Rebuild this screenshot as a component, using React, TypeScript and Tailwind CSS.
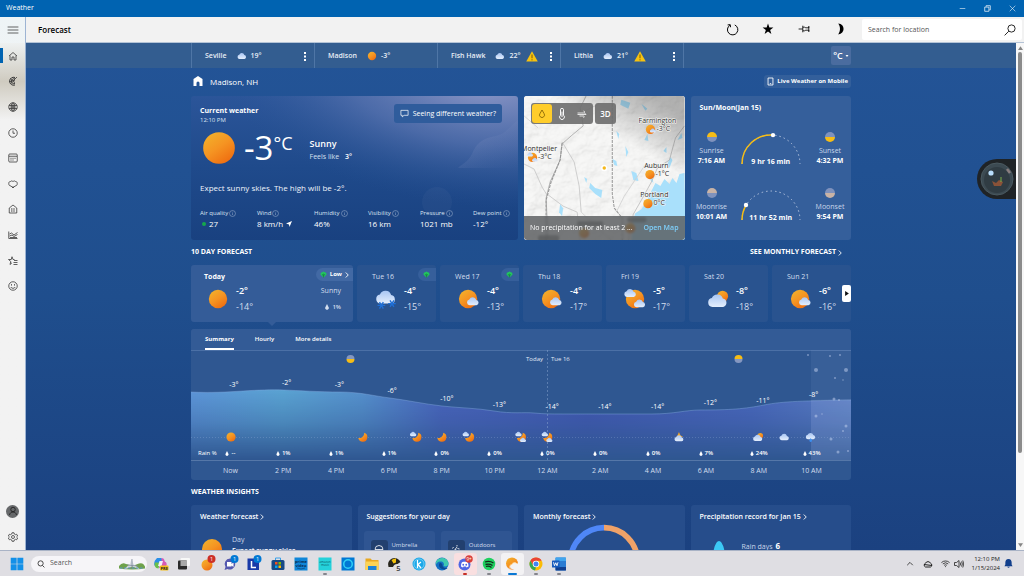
import type { ReactNode } from "react";

type Kind =
  | "sun" | "partly" | "partlyTwo" | "mostly" | "snow" | "cloud"
  | "moon" | "moonCloud" | "moonTwo" | "starCloud" | "drizzle";

const CLOUD = "M6 15a5 5 0 0 1-.6-9.9A6.5 6.5 0 0 1 17.6 5.6 4.8 4.8 0 0 1 18 15z";
const MOON = "M14 1.500A10 10 0 1 1 1.200 13C8 14.500 14.500 9 14 1.500z";

function Defs() {
  return (
    <svg width="0" height="0" className="absolute" aria-hidden="true">
      <defs>
        <linearGradient id="sunFill" x1="0.1" y1="0" x2="0.8" y2="1">
          <stop offset="0" stopColor="#f2b32c" />
          <stop offset="0.5" stopColor="#f59422" />
          <stop offset="1" stopColor="#ee6a0f" />
        </linearGradient>
        <linearGradient id="cloudFill" x1="0" y1="0" x2="0" y2="1">
          <stop offset="0" stopColor="#a9c6f3" />
          <stop offset="1" stopColor="#e4eefc" />
        </linearGradient>
      </defs>
    </svg>
  );
}

function Flake({ x, y }: { x: number; y: number }) {
  return (
    <g transform={`translate(${x} ${y})`} stroke="#1f6fd6" strokeWidth="1.5">
      <path d="M-4.200 0h8.400M-2.100-3.600l4.200 7.200M2.100-3.600l-4.200 7.200" />
    </g>
  );
}

function Glyph({ kind }: { kind: Kind }) {
  const cloud = (t: string) => <path d={CLOUD} transform={t} fill="url(#cloudFill)" />;
  switch (kind) {
    case "sun":
      return <circle cx="12" cy="12" r="10" fill="url(#sunFill)" />;
    case "partly":
      return <><circle cx="11" cy="12" r="10" fill="url(#sunFill)" />{cloud("translate(9 9.5) scale(.62)")}</>;
    case "partlyTwo":
      return <><circle cx="12" cy="12" r="10" fill="url(#sunFill)" />{cloud("translate(-.5 .5) scale(.62)")}{cloud("translate(10 12) scale(.6)")}</>;
    case "mostly":
      return <><circle cx="17" cy="9" r="6" fill="url(#sunFill)" />{cloud("translate(0 6) scale(.98)")}</>;
    case "snow":
      return <>{cloud("translate(0 2)")}<Flake x={7} y={19} /><Flake x={18.5} y={17} /></>;
    case "cloud":
      return cloud("translate(0 4)");
    case "moon":
      return <path d={MOON} transform="translate(1 1)" fill="url(#sunFill)" />;
    case "moonCloud":
      return <><path d={MOON} transform="translate(4 1)" fill="url(#sunFill)" />{cloud("translate(-1 0) scale(.68)")}</>;
    case "moonTwo":
      return <><path d={MOON} transform="translate(2 1)" fill="url(#sunFill)" />{cloud("translate(-1 0) scale(.68)")}{cloud("translate(9 13) scale(.66)")}</>;
    case "starCloud":
      return <><path d="M12 1l3 7 6 4H6l3-4z" fill="#f5a623" />{cloud("translate(1 7) scale(.95)")}</>;
    case "drizzle":
      return <>{cloud("translate(0 2)")}<path d="M12 14l2.6 4.5a2.9 2.9 0 1 1-5.2 0z" fill="#3c8ff0" /></>;
  }
}

function WeatherIcon({ kind, className }: { kind: Kind; className: string }) {
  return (
    <svg viewBox="0 0 24 24" className={className} aria-hidden="true">
      <Glyph kind={kind} />
    </svg>
  );
}

function Line({ children, className = "size-[10px]", width = 1.6 }: { children: ReactNode; className?: string; width?: number }) {
  return (
    <svg viewBox="0 0 20 20" className={className} fill="none" stroke="currentColor" strokeWidth={width} aria-hidden="true">
      {children}
    </svg>
  );
}

function Drop({ className = "h-[6px] w-[4px]" }: { className?: string }) {
  return (
    <svg viewBox="0 0 8 12" className={className} aria-hidden="true">
      <path d="M4 0l3 6a3.6 3.6 0 1 1-6 0z" fill="currentColor" />
    </svg>
  );
}

function Chevron() {
  return (
    <svg viewBox="0 0 8 12" className="h-[6px] w-[4px]" fill="none" stroke="currentColor" strokeWidth="1.8" aria-hidden="true">
      <path d="M1.5 1l5 5-5 5" />
    </svg>
  );
}

function Info() {
  return (
    <Line className="size-[7px] opacity-70" width={1.5}>
      <circle cx="10" cy="10" r="8.5" />
      <path d="M10 9v5.5M10 5.2v2" />
    </Line>
  );
}

/* ---------- window chrome ---------- */

function TitleBar() {
  return (
    <div className="flex h-[17px] shrink-0 items-center bg-[#0063b1] pl-[6px] text-[7px] text-white">
      <span>Weather</span>
      <div className="ml-auto flex">
        <button aria-label="Minimize" className="flex w-[25px] justify-center"><Line className="size-[7px]"><path d="M2 10h16" /></Line></button>
        <button aria-label="Restore" className="flex w-[25px] justify-center"><Line className="size-[7px]" width={2}><path d="M2 6h12v12H2zM6 5V2h12v12h-3" /></Line></button>
        <button aria-label="Close" className="flex w-[24px] justify-center"><Line className="size-[7px]"><path d="M2 2l16 16M18 2L2 18" /></Line></button>
      </div>
    </div>
  );
}

const NAV: { label: string; icon: ReactNode }[] = [
  { label: "Home", icon: <path d="M2 10l8-7 8 7M4 9v9h4v-6h4v6h4V9" /> },
  { label: "Maps", icon: <><path d="M14 3A8 8 0 1 0 14 18M14 6a5 5 0 1 0 0 9M14 9a2 2 0 1 0 0 3" strokeWidth="2" /><path d="M9 11l9-9" /><path d="M4 5l6 5M2 11h6M5 16l4-4" /></> },
  { label: "Hourly Maps", icon: <><circle cx="10" cy="10" r="8.5" /><ellipse cx="10" cy="10" rx="4" ry="8.5" /><path d="M2 7h16M2 13h16M10 2v16" /><path d="M6 10h8" strokeWidth="2" /></> },
  { label: "Hourly", icon: <><circle cx="10" cy="10" r="8.5" /><path d="M10 5v5.5h4" /></> },
  { label: "Monthly", icon: <><rect x="1.5" y="2" width="17" height="16" rx="2" /><path d="M2 6.500h16" /><path d="M5 10.500h10M5 14h7" strokeDasharray="2 2" strokeWidth="2" /></> },
  { label: "Pollen", icon: <path d="M10 18v-4M6 14c-3 0-4.500-2-4.500-5S3 5 5 5c1-2 3-1 5 0 2-1 4-2 5 0 2 0 3.500 1 3.500 4s-1.500 5-4.500 5l-4 4z" /> },
  { label: "Life", icon: <><path d="M2.500 18V8L10 2l7.500 6v10z" /><path d="M6 10h8M6 14h8" strokeDasharray="3 1.500" strokeWidth="2" /></> },
  { label: "Trends", icon: <path d="M1.500 3v14H19M3 8l4-2 5 4 7-5M3 12l5-2 4 3 7-4M4 15h14" /> },
  { label: "Favorites", icon: <path d="M13 7h-3L8 1.500 6.500 7H1l4.500 4L4 17l4-3.500M12 9h7M11 13h8M11 17h8" /> },
  { label: "Feedback", icon: <><circle cx="10" cy="10" r="8.500" /><path d="M5.500 12c1.500 3.500 7.500 3.500 9 0" /><path d="M7 6.500v2.500M13 6.500v2.500" strokeWidth="2" /></> },
];

function Sidebar() {
  return (
    <nav aria-label="Sections" className="flex w-[26px] shrink-0 flex-col border-r border-[#9db4d3] bg-linear-to-b from-[#eef4f6] via-[#f2f2f2] via-30% to-[#f2f2f2] text-[#3a3a3a]">
      <button aria-label="Menu" className="flex h-[26px] items-center justify-center"><Line className="size-[12px]" width={1.3}><path d="M1 5h18M1 10h18M1 15h18" /></Line></button>
      <div className="grid h-64 grid-rows-10 bg-linear-to-b from-[#eef1f1] via-[#cfcbc0] via-15% to-[#f2f2f2] to-30%">
        {NAV.map((n, i) => (
          <button key={n.label} aria-label={n.label} className="flex items-center">
            <span className={i === 0 ? "h-[15px] w-[3px] bg-[#0063b1]" : "h-[15px] w-[3px]"} />
            <span className="flex flex-1 justify-center pr-[2px]"><Line>{n.icon}</Line></span>
          </button>
        ))}
      </div>
      <button aria-label="Account" className="mt-auto flex h-[26px] items-center justify-center">
        <span className="flex size-[13px] items-center justify-center rounded-full bg-[#66686a] text-[#1c1c1c]">
          <Line><circle cx="10" cy="7" r="4.500" /><path d="M3 18c1-8 13-8 14 0" /></Line>
        </span>
      </button>
      <button aria-label="Settings" className="flex h-[26px] items-center justify-center">
        <Line>
          <path d="M8 1.500h4l.6 2.600 2.200 1.200 2.500-.8 2 3.500-2 1.900v.2l2 1.900-2 3.500-2.500-.8-2.200 1.200-.6 2.600H8l-.6-2.600-2.200-1.200-2.500.8-2-3.500 2-1.900v-.2l-2-1.900 2-3.500 2.500.8 2.200-1.200z" />
          <circle cx="10" cy="10" r="3" />
        </Line>
      </button>
    </nav>
  );
}

function Header() {
  return (
    <header className="flex h-[26px] shrink-0 items-center border-b border-[#b4c3d6] bg-[#f2f2f2] pr-[2px] pl-[12px] text-black">
      <h1 className="text-[8px] leading-[12px] font-semibold">Forecast</h1>
      <div className="mr-[4px] ml-auto flex">
        <button aria-label="Refresh" className="flex w-9 justify-center"><Line className="size-[13px]" width={1.5}><path d="M6 3.500A8 8 0 1 0 13.500 3M2.500 3l4-.5.500 4" /></Line></button>
        <button aria-label="Favorite" className="flex w-9 justify-center">
          <svg viewBox="0 0 20 20" className="size-[12px]"><path d="M10 1l2.300 6.500H19l-5.400 4.100 2 6.900L10 14.300l-5.600 4.200 2-6.900L1 7.500h6.700z" /></svg>
        </button>
        <button aria-label="Pin" className="flex w-9 justify-center"><Line className="size-[12px]" width={1.4}><path d="M1 10h7M8 4.500v11M8 7h3l2 1h5V5.500v9V12h-5l-2 1H8" /></Line></button>
        <button aria-label="Dark mode" className="flex w-9 justify-center">
          <svg viewBox="0 0 20 20" className="size-[12px]"><path d="M7 1c12 1 12 17 0 18 4-5 4-13 0-18z" /></svg>
        </button>
      </div>
      <label className="flex h-[21px] w-[160px] items-center rounded-[2px] bg-white px-[6px]">
        <input aria-label="Search for location" placeholder="Search for location" className="min-w-0 flex-1 bg-transparent pt-[2px] text-[7px] outline-none placeholder:text-[#555]" />
        <Line className="size-[12px]" width={1.4}><circle cx="12.500" cy="7.500" r="6" /><path d="M8 12l-7 7" /></Line>
      </label>
    </header>
  );
}

/* ---------- locations ---------- */

const PLACES: { name: string; kind: Kind; temp: string; alert?: boolean; menu?: boolean }[] = [
  { name: "Seville", kind: "cloud", temp: "19°", menu: true },
  { name: "Madison", kind: "sun", temp: "-3°" },
  { name: "Fish Hawk", kind: "cloud", temp: "22°", alert: true, menu: true },
  { name: "Lithia", kind: "cloud", temp: "21°", alert: true, menu: true },
];

function LocationBar() {
  return (
    <div className="h-[25px] bg-[#335d90]">
      <div className="mx-auto flex h-full w-full max-w-[660px] items-center">
        <div className="flex h-full border-r border-[#4f76a6]">
          {PLACES.map((p) => (
            <div key={p.name} className="flex w-[123px] items-center border-l border-[#4f76a6] pt-px pr-[8px] pl-[13px] text-[7px] leading-[12px] font-semibold text-[#e8eef6]">
              <a href="#place">{p.name}</a>
              <WeatherIcon kind={p.kind} className="mr-[4px] ml-[10px] size-[10px]" />
              <span>{p.temp}</span>
              {p.alert && (
                <svg viewBox="0 0 24 22" className="ml-[6px] h-[11px] w-[12px]" role="img" aria-label="Alert">
                  <path d="M12 0.500l11.500 20.500H.5z" fill="#f5c211" />
                  <path d="M12 7v7.500M12 16.500v2.200" stroke="#7a5b06" strokeWidth="2" />
                </svg>
              )}
              {p.menu && (
                <button aria-label={`${p.name} options`} className="ml-auto">
                  <svg viewBox="0 0 4 18" className="h-[9px] w-[2px]" fill="#fff"><path d="M0 0h4v4H0zM0 7h4v4H0zM0 14h4v4H0z" /></svg>
                </button>
              )}
            </div>
          ))}
        </div>
        <button className="ml-auto flex h-[19px] w-[20px] items-center justify-center gap-[2px] rounded-[2px] bg-[#4a6c9f] text-[9px] font-semibold text-white">
          °C
          <svg viewBox="0 0 6 4" className="h-[2px] w-[4px]"><path d="M0 0h6L3 4z" fill="currentColor" /></svg>
        </button>
      </div>
    </div>
  );
}

/* ---------- current weather ---------- */

const METRICS: { label: string; value: string; mark?: "dot" | "arrow" }[] = [
  { label: "Air quality", value: "27", mark: "dot" },
  { label: "Wind", value: "8 km/h", mark: "arrow" },
  { label: "Humidity", value: "46%" },
  { label: "Visibility", value: "16 km" },
  { label: "Pressure", value: "1021 mb" },
  { label: "Dew point", value: "-12°" },
];

function CurrentCard() {
  return (
    <section className="relative col-span-2 h-[144px] overflow-hidden rounded-[3px] bg-linear-to-b from-[#2b5599] via-[#1f4a8b] to-[#194180] text-white">
      <svg viewBox="0 0 327 144" preserveAspectRatio="none" className="absolute inset-0 size-full" aria-hidden="true">
        <defs>
          <radialGradient id="haze" gradientUnits="userSpaceOnUse" cx="0" cy="0" r="1" gradientTransform="translate(290 -14) rotate(6) scale(270 125)">
            <stop offset="0" stopColor="#929bc9" stopOpacity="1" />
            <stop offset="0.5" stopColor="#5f78b3" stopOpacity="0.65" />
            <stop offset="1" stopColor="#2a5496" stopOpacity="0" />
          </radialGradient>
          <linearGradient id="puff" x1="0" y1="0" x2="1" y2="1">
            <stop offset="0" stopColor="#a3a9cf" stopOpacity="0.35" />
            <stop offset="1" stopColor="#4a6aaa" stopOpacity="0" />
          </linearGradient>
        </defs>
        <rect width="327" height="144" fill="url(#haze)" />
        <path d="M327 24c-8 6-12 14-22 16-14 2-20 8-24 18-4 8-10 10-14 14h60z" fill="url(#puff)" />
        <circle cx="246" cy="106" r="15" fill="#ffffff" opacity="0.03" />
      </svg>
      <div className="relative flex h-full flex-col pl-[9px]">
        <div className="flex justify-between pt-[8px] pr-[16px]">
          <div className="pt-[2px]">
            <h2 className="text-[7px] leading-[10px] font-bold">Current weather</h2>
            <p className="text-[6px] leading-[9px] text-[#dbe4f2]">12:10 PM</p>
          </div>
          <button className="flex h-[19px] items-center gap-[4px] rounded-[3px] bg-[#2f5c9c] px-[6px] text-[7px] leading-[12px] font-medium">
            <Line className="size-[9px]"><path d="M2 3h16v11H9l-4 3.500V14H2z" /></Line>
            Seeing different weather?
          </button>
        </div>
        <div className="mt-[2px] flex h-[41px] items-center">
          <WeatherIcon kind="sun" className="size-[38px]" />
          <div className="ml-[6px] flex items-start">
            <span className="text-[33px] leading-[36px] font-normal">-3</span>
            <span className="text-[18px] leading-[26px]">°C</span>
          </div>
          <div className="ml-[17px] pt-[4px]">
            <p className="text-[9px] leading-[14px] font-semibold">Sunny</p>
            <p className="flex gap-[6px] text-[7px] leading-[12px] text-[#d6e0ef]"><span>Feels like</span><span className="font-semibold text-white">3°</span></p>
          </div>
        </div>
        <p className="mt-[12px] text-[8px] leading-[16px] font-medium text-[#eef3fa]">Expect sunny skies. The high will be -2°.</p>
        <dl className="mt-auto mb-[11px] grid grid-cols-[57fr_57fr_54fr_52fr_53fr_45fr]">
          {METRICS.map((m) => (
            <div key={m.label}>
              <dt className="flex items-center gap-[1px] text-[6px] leading-[10px] whitespace-nowrap text-[#dbe4f2]">{m.label}<Info /></dt>
              <dd className="flex items-center gap-[3px] text-[8px] leading-[11px] font-medium whitespace-nowrap">
                {m.mark === "dot" && <span className="ml-[2px] size-[4px] rounded-full bg-[#15a84c]" />}
                {m.value}
                {m.mark === "arrow" && <svg viewBox="0 0 12 12" className="size-[6px]"><path d="M12 0L7 12 6 7 0 5z" fill="#fff" /></svg>}
              </dd>
            </div>
          ))}
        </dl>
      </div>
    </section>
  );
}

/* ---------- map ---------- */

const CITIES: { name: string; x: number; y: number; temp: string; kind: Kind }[] = [
  { name: "Farmington", x: 133, y: 27, temp: "-3°C", kind: "partly" },
  { name: "Montpelier", x: 15, y: 55, temp: "-3°C", kind: "partlyTwo" },
  { name: "Auburn", x: 132, y: 72, temp: "-1°C", kind: "sun" },
  { name: "Portland", x: 130, y: 101, temp: "0°C", kind: "sun" },
];

function MapCard() {
  return (
    <section className="relative h-[144px] overflow-hidden rounded-[3px] bg-[#efefed]">
      <svg viewBox="0 0 160 144" preserveAspectRatio="xMidYMid slice" className="absolute inset-0 size-full" aria-label="Precipitation map">
        <defs>
          <filter id="relief" x="0" y="0" width="100%" height="100%">
            <feTurbulence type="fractalNoise" baseFrequency="0.07 0.09" numOctaves="4" seed="8" />
            <feDiffuseLighting surfaceScale="3" lightingColor="#ffffff">
              <feDistantLight azimuth="225" elevation="62" />
            </feDiffuseLighting>
          </filter>
          <linearGradient id="mapShade" x1="0.6" y1="0.3" x2="0.8" y2="0">
            <stop offset="0" stopColor="#000" stopOpacity="0" />
            <stop offset="1" stopColor="#333" stopOpacity="0.35" />
          </linearGradient>
        </defs>
        <rect width="160" height="144" fill="#f5f5f3" />
        <rect width="160" height="144" filter="url(#relief)" opacity="0.24" />
        <path d="M160 77l-5 1-3 9-4-5-3 6-5-5-4 7-5-3-4 8-4 9-6 9-6 4-3 8-1 19h54z" fill="#a9e0fb" />
        <g fill="#a9e0fb">
          <path d="M66 87l5 5 7 2-1 8-6-4-6-6z" />
          <path d="M107 75l5 2 2 8-5-1z" />
          <path d="M36 108l3 4-1 8-3-4z" />
          <path d="M97 4l9 3-2 6-8-4z" />
          <path d="M88 63l4 2 1 5-3-1zM92 35l3 3-1 5zM101 50l3 6-2 5zM60 81l3 2-1 4zM120 44l3-6 1 7zM143 68l3-7 2 3-3 8zM153 44l4-7 1 5zM139 55l3-4v6zM117 8l6 5-2 2zM127 78l2 9-3-3z" />
        </g>
        <g fill="none" stroke="#a4a4a4" strokeWidth="0.8">
          <path d="M62 0l-6 12 3 18-12 10-9 8-2 16-10 22-4 16 2 40" />
          <path d="M0 68l10 5 8 18 5 8M23 98l16 12 14 6 3 28M38 46l12 20 5 24 2 26" stroke="#c4c4c4" />
          <path d="M160 30l-9 12-6 22-12 8-6 14-10 18-8 14-5 26" stroke="#b9b9b9" />
          <path d="M75 8l-16 8M57 116l30 28M0 20l14 12M120 70l-20 30-8 16" stroke="#cfcfcf" />
        </g>
        <path d="M88 0v98l2 14 8 10v22" fill="none" stroke="#969696" strokeWidth="1" strokeDasharray="3 1" />
        <path d="M38 47l-2 17-9 22-5 18v40" fill="none" stroke="#969696" strokeWidth="1.100" strokeDasharray="3 1" />
        <rect width="160" height="144" fill="url(#mapShade)" />
        <circle cx="80" cy="72" r="3.200" fill="#fff" />
        <circle cx="80" cy="72" r="1.700" fill="#f5b81c" />
        {CITIES.map((c) => (
          <g key={c.name} fontSize="7" fontWeight="500" fill="#2f2f2f" stroke="#f6f6f4" strokeWidth="1.200" paintOrder="stroke">
            <text x={c.x} y={c.y} textAnchor="middle">{c.name}</text>
            <text x={c.x - 1} y={c.y + 8}>{c.temp}</text>
            <g transform={`translate(${c.x - 12} ${c.y + 1}) scale(.46)`} stroke="none"><Glyph kind={c.kind} /></g>
          </g>
        ))}
        <g fill="url(#sunFill)">
          <circle cx="60" cy="137" r="5" /><circle cx="106" cy="132" r="5" />
        </g>
        <g fill="#4a4a48" opacity="0.6">
          <rect x="53" y="125" width="26" height="5" rx="2" /><rect x="103" y="121" width="19" height="5" rx="2" /><rect x="14" y="139" width="21" height="5" rx="2" />
        </g>
      </svg>
      <div className="relative flex h-full flex-col justify-between">
        <div className="flex gap-[2px] p-[7px] text-white">
          <div className="flex h-[21px] rounded-[3px] bg-[#6d6d6d]/90 p-px">
            <button aria-label="Precipitation" className="flex w-[20px] items-center justify-center rounded-[3px] bg-[#ffcd2b] text-[#7a5a00]"><Line><path d="M10 2l4 7a5 5 0 1 1-8 0z" /></Line></button>
            <button aria-label="Temperature" className="flex w-[20px] items-center justify-center"><Line className="size-[12px]" width={1.6}><path d="M7.500 3a2.500 2.500 0 0 1 5 0v9a4 4 0 1 1-5 0zM10 6v9" /></Line></button>
            <button aria-label="Wind" className="flex w-[20px] items-center justify-center"><Line width={1.600}><path d="M1 8h12c3 0 3-4 0-4M1 11h17l-3-3M5 14h8c2 0 2 3 0 3" /></Line></button>
          </div>
          <button className="h-[21px] w-[21px] rounded-[3px] bg-[#6d6d6d]/90 text-[8px] font-semibold">3D</button>
        </div>
        <div className="flex h-[24px] items-center justify-between bg-[#55585a]/80 px-[6px] text-[7px] whitespace-nowrap text-white backdrop-blur-[1px]">
          <span className="font-medium">No precipitation for at least 2 ...</span>
          <a href="#map" className="font-semibold text-[#7fd0fb]">Open Map</a>
        </div>
      </div>
    </section>
  );
}

/* ---------- sun and moon ---------- */

function HalfDisc({ top, bottom, className }: { top: string; bottom: string; className: string }) {
  return (
    <svg viewBox="0 0 20 20" className={className} aria-hidden="true">
      <path d="M0 10a10 10 0 0 1 20 0z" fill={top} />
      <path d="M0 10a10 10 0 0 0 20 0z" fill={bottom} />
    </svg>
  );
}

function RiseRow(p: { tone: string; rise: string; riseAt: string; set: string; setAt: string; span: string; done: string; dot: [number, number] }) {
  const end = (label: string, at: string, a: string, b: string) => (
    <div className="flex w-[32px] flex-col items-center whitespace-nowrap">
      <HalfDisc top={a} bottom={b} className="mb-[4px] size-[10px]" />
      <span className="text-[7px] leading-[10px] text-[#c9d6ea]">{label}</span>
      <span className="text-[7px] leading-[10px] font-bold">{at}</span>
    </div>
  );
  return (
    <div className="flex h-[56px] justify-between">
      {end(p.rise, p.riseAt, p.tone, "#7f92bd")}
      <div className="flex flex-col items-center">
        <svg viewBox="0 0 62 32" className="h-[32px] w-[62px]" fill="none" aria-hidden="true">
          <path d="M2 32a29 29 0 0 1 58 0" stroke="#b4c3de" strokeWidth="1" strokeDasharray="1.500 3" />
          <path d={p.done} stroke="#f6bd16" strokeWidth="1.500" />
          <circle cx={p.dot[0]} cy={p.dot[1]} r="2.200" fill="#fff" />
        </svg>
        <span className="-mt-[8px] text-[7px] leading-[11px] font-bold whitespace-nowrap">{p.span}</span>
      </div>
      {end(p.set, p.setAt, "#7f92bd", p.tone)}
    </div>
  );
}

function SunMoonCard() {
  return (
    <section className="h-[144px] rounded-[3px] bg-[#355f9b] px-[5px] pt-[6px] text-white">
      <h2 className="mb-[19px] pl-[4px] text-[7px] leading-[11px] font-bold">Sun/Moon(Jan 15)</h2>
      <RiseRow tone="#f6bd16" rise="Sunrise" riseAt="7:16 AM" set="Sunset" setAt="4:32 PM" span="9 hr 16 min" done="M2 32a29 29 0 0 1 31-28.900" dot={[33, 3.1]} />
      <RiseRow tone="#c9b3a6" rise="Moonrise" riseAt="10:01 AM" set="Moonset" setAt="9:54 PM" span="11 hr 52 min" done="M2 32a29 29 0 0 1 4-14.700" dot={[6, 17]} />
    </section>
  );
}

/* ---------- ten days ---------- */

const DAYS: { day: string; kind: Kind; hi: string; lo: string; pollen?: boolean }[] = [
  { day: "Tue 16", kind: "snow", hi: "-4°", lo: "-15°", pollen: true },
  { day: "Wed 17", kind: "partly", hi: "-4°", lo: "-13°", pollen: true },
  { day: "Thu 18", kind: "partly", hi: "-4°", lo: "-17°" },
  { day: "Fri 19", kind: "partlyTwo", hi: "-5°", lo: "-17°" },
  { day: "Sat 20", kind: "mostly", hi: "-8°", lo: "-18°" },
  { day: "Sun 21", kind: "partly", hi: "-6°", lo: "-16°" },
];

function Pollen() {
  return (
    <svg viewBox="0 0 16 16" className="size-[7px]" aria-hidden="true">
      <path d="M2 4l3-1 3-2 3 2 3 1 1 4-4 4-3 3-3-3-4-4z" fill="#22c55e" />
      <path d="M5 7l3 5 3-5M8 6v9" stroke="#13713a" strokeWidth="1.200" fill="none" />
    </svg>
  );
}

function Temps({ hi, lo }: { hi: string; lo: string }) {
  return (
    <div className="text-[9px] leading-[16px] font-medium">
      <p className="font-semibold">{hi}</p>
      <p className="text-[#d3deee]">{lo}</p>
    </div>
  );
}

function TenDays() {
  return (
    <section>
      <div className="flex h-[25px] items-center justify-between pr-[9px] text-[7px] font-bold text-white">
        <h2>10 DAY FORECAST</h2>
        <a href="#monthly" className="flex items-center gap-[2px]">SEE MONTHLY FORECAST <Chevron /></a>
      </div>
      <div className="relative grid h-[57px] grid-cols-[162fr_79fr_79fr_79fr_79fr_79fr_79fr] gap-[4px] text-white">
        <div className="relative flex min-w-0 flex-col rounded-[3px] bg-[#345c98] pt-[6px] pl-[13px]">
          <h3 className="text-[7px] leading-[12px] font-bold">Today</h3>
          <div className="flex items-center">
            <WeatherIcon kind="sun" className="mr-[7px] ml-[3px] size-[22px] shrink-0" />
            <Temps hi="-2°" lo="-14°" />
            <div className="mr-[12px] ml-auto text-right text-[7px] leading-[16px] text-[#d3deee]">
              <p>Sunny</p>
              <p className="flex items-center justify-end gap-[3px] text-[6px] leading-[16px] font-semibold"><Drop />1%</p>
            </div>
          </div>
          <span className="absolute top-[3px] right-0 flex h-[13px] items-center gap-[3px] rounded-l-full bg-[#4269a4] pr-[4px] pl-[4px] text-[6px] font-bold"><Pollen /> <span>Low</span> <Chevron /></span>
          <svg viewBox="0 0 8 4" className="absolute top-full left-1/2 h-[4px] w-[8px] -translate-x-1/2" aria-hidden="true"><path d="M0 0h8L4 4z" fill="#345c98" /></svg>
        </div>
        {DAYS.map((d) => (
          <div key={d.day} className="relative flex min-w-0 flex-col rounded-[3px] bg-[#29538f] pt-[6px]">
            <h3 className="pl-[15px] text-[7px] leading-[12px] font-medium text-[#d3deee]">{d.day}</h3>
            <div className="flex items-center gap-[7px] pl-[18px]">
              <WeatherIcon kind={d.kind} className="size-[22px] shrink-0" />
              <Temps hi={d.hi} lo={d.lo} />
            </div>
            {d.pollen && <span className="absolute top-[3px] right-0 flex h-[13px] w-[18px] items-center rounded-l-full bg-[#365f9b] pl-[5px]"><Pollen /></span>}
          </div>
        ))}
        <button aria-label="Next days" className="absolute top-[20px] right-0 flex h-[17px] w-[9px] items-center justify-center rounded-[2px] bg-white">
          <svg viewBox="0 0 6 8" className="h-[5px] w-[4px]"><path d="M0 0l6 4-6 4z" fill="#111" /></svg>
        </button>
      </div>
    </section>
  );
}

/* ---------- hourly chart ---------- */

const HOURS: { time: string; rain: string; temp: string; y: number }[] = [
  { time: "Now", rain: "--", temp: "-3°", y: 37 },
  { time: "2 PM", rain: "1%", temp: "-2°", y: 35 },
  { time: "4 PM", rain: "1%", temp: "-3°", y: 37 },
  { time: "6 PM", rain: "1%", temp: "-6°", y: 43 },
  { time: "8 PM", rain: "0%", temp: "-10°", y: 51 },
  { time: "10 PM", rain: "0%", temp: "-13°", y: 57 },
  { time: "12 AM", rain: "0%", temp: "-14°", y: 59 },
  { time: "2 AM", rain: "0%", temp: "-14°", y: 59 },
  { time: "4 AM", rain: "0%", temp: "-14°", y: 59 },
  { time: "6 AM", rain: "7%", temp: "-12°", y: 55 },
  { time: "8 AM", rain: "24%", temp: "-11°", y: 53 },
  { time: "10 AM", rain: "43%", temp: "-8°", y: 47 },
];

const HOUR_ICONS: { at: number; kind: Kind }[] = [
  { at: 0, kind: "sun" }, { at: 5, kind: "moon" }, { at: 7, kind: "moonCloud" }, { at: 8, kind: "moon" },
  { at: 9, kind: "moonCloud" }, { at: 11, kind: "moonTwo" }, { at: 12, kind: "moonTwo" }, { at: 17, kind: "starCloud" },
  { at: 20, kind: "mostly" }, { at: 21, kind: "cloud" }, { at: 22, kind: "drizzle" },
];

const CURVE = "M0 42C20 43 36 42 52 41S80 39.500 93 40s36 2 56 2 34 4 50 6 34 6 52 8 34 2 52 5 30 1 40 2 18 1 28 1h90c22 0 34-4 48-4 30 0 44-1 64-5s40-4 87-5";
const SNOW = [[625, 20, 2], [617, 5, 1], [639, 6, 1], [649, 5, 1], [655, 20, 2], [644, 28, 1], [625, 66, 1.5], [643, 49, 1.5], [648, 50, 1], [655, 76, 1.5], [652, 81, 1], [640, 89, 1.5], [647, 102, 1.5], [657, 101, 1], [631, 64, 0.8], [652, 30, 0.8]];

function HourlyCard() {
  return (
    <section className="mt-[7px] rounded-[3px] bg-[#2f5791] text-white">
      <div role="tablist" className="flex h-[21px] gap-[21px] rounded-t-[3px] bg-[#335b96] pl-[14px] text-[6px] font-semibold">
        <button role="tab" aria-selected="true" className="border-b-2 border-white pt-[2px] font-bold">Summary</button>
        <button role="tab" aria-selected="false" className="border-b-2 border-transparent pt-[2px]">Hourly</button>
        <button role="tab" aria-selected="false" className="border-b-2 border-transparent pt-[2px]">More details</button>
      </div>
      <div className="relative">
        <svg viewBox="0 0 660 110" className="block w-full" role="img" aria-label="Temperature over the next hours">
          <defs>
            <linearGradient id="area" x1="0" x2="1">
              <stop offset="0" stopColor="#5d95d8" />
              <stop offset="0.140" stopColor="#5aa3d2" />
              <stop offset="0.260" stopColor="#5590cc" />
              <stop offset="0.380" stopColor="#4a63bd" />
              <stop offset="0.600" stopColor="#4257b2" />
              <stop offset="0.850" stopColor="#4a66bd" />
              <stop offset="1" stopColor="#5c7fc4" />
            </linearGradient>
            <linearGradient id="fade" gradientUnits="userSpaceOnUse" x1="0" x2="0" y1="40" y2="110">
              <stop offset="0" stopColor="#fff" stopOpacity="1" />
              <stop offset="0.450" stopColor="#fff" stopOpacity="0.650" />
              <stop offset="1" stopColor="#fff" stopOpacity="0" />
            </linearGradient>
            <mask id="fadeMask"><rect width="660" height="110" fill="url(#fade)" /></mask>
          </defs>
          <path d="M0 .5h660" stroke="#4b70a6" />
          <path d={`${CURVE}V110H0z`} fill="url(#area)" mask="url(#fadeMask)" />
          <path d={CURVE} fill="none" stroke="#7fa6dc" strokeOpacity="0.45" strokeWidth="1" />
          <path d="M0 87.500h660" stroke="#a9c0e4" strokeOpacity="0.25" strokeDasharray="1 2" />
          <rect x="620" width="40" height="110" fill="#a9bcec" opacity="0.080" />
          <path d="M620 50q20-1 40-1v61h-40z" fill="#a9bcec" opacity="0.120" />
          {SNOW.map(([x, y, r]) => <circle key={`${x}-${y}`} cx={x} cy={y} r={r} fill="#c3d2ef" opacity="0.500" />)}
          <path d="M356.500 0v110" stroke="#8aa6d0" strokeOpacity="0.5" strokeDasharray="2 2" />
          <g fontSize="6" fontWeight="500" fill="#e2eaf6">
            <text x="352" y="11" textAnchor="end">Today</text>
            <text x="360" y="11">Tue 16</text>
          </g>
          <g fontSize="7" fontWeight="500" fill="#ffffff" textAnchor="middle">
            {HOURS.map((h, i) => <text key={h.time} x={43 + i * 52.7 + (i > 3 && i < 11 ? 2 : 0)} y={h.y}>{h.temp}</text>)}
          </g>
          {HOUR_ICONS.map((h) => (
            <g key={h.at} transform={`translate(${34.5 + h.at * 26.35} 81.500) scale(.46)`}><Glyph kind={h.kind} /></g>
          ))}
          <g><path d="M155.500 9a4 4 0 0 1 8 0z" fill="#8597c0" /><path d="M155.500 9a4 4 0 0 0 8 0z" fill="#f6bd16" /></g>
          <g><path d="M543.500 9a4 4 0 0 1 8 0z" fill="#f6bd16" /><path d="M543.500 9a4 4 0 0 0 8 0z" fill="#8597c0" /></g>
        </svg>
        <div className="absolute inset-x-0 bottom-[1px] grid grid-cols-12 px-[13px] text-[6px] leading-[12px] font-semibold">
          {HOURS.map((h) => <span key={h.time} className="flex items-center justify-center gap-[2px]"><Drop className="h-[5px] w-[4px]" />{h.rain}</span>)}
        </div>
        <span className="absolute bottom-[1px] left-[7px] text-[6px] leading-[12px]">Rain %</span>
      </div>
      <div className="grid h-[20px] grid-cols-12 items-center border-t border-[#5577a8] px-[13px] text-center text-[7px] leading-[12px] text-[#d3deee]">
        {HOURS.map((h) => <span key={h.time}>{h.time}</span>)}
      </div>
    </section>
  );
}

/* ---------- insights ---------- */

function InsightCard({ title, link = true, children }: { title: string; link?: boolean; children: ReactNode }) {
  return (
    <section className="h-[110px] overflow-hidden rounded-[3px] bg-[#264d8b] px-[9px] pt-[6px] text-white">
      <h3 className="flex items-center gap-[2px] text-[7px] leading-[12px] font-semibold whitespace-nowrap">{title}{link && <Chevron />}</h3>
      {children}
    </section>
  );
}

function Suggestion({ label, children }: { label: string; children: ReactNode }) {
  return (
    <div className="flex h-[50px] flex-1 items-start gap-[4px] rounded-[3px] bg-[#2f5592] p-[7px] text-[6px]">
      <span className="mt-[2px] flex size-[17px] items-center justify-center rounded-[3px] bg-[#22406f]"><Line>{children}</Line></span>
      <span className="pt-[2px] leading-[10px] text-[#d3deee]">{label}</span>
    </div>
  );
}

function Insights() {
  return (
    <section>
      <h2 className="flex h-[25px] items-center text-[7px] font-bold text-white">WEATHER INSIGHTS</h2>
      <div className="grid grid-cols-4 gap-[6px]">
        <InsightCard title="Weather forecast">
          <div className="mt-[11px] flex gap-[8px]">
            <WeatherIcon kind="sun" className="mt-[3px] size-[24px]" />
            <div className="text-[7px] leading-[11px]"><p className="text-[#c9d6ea]">Day</p><p className="font-semibold">Expect sunny skies.</p></div>
          </div>
        </InsightCard>
        <InsightCard title="Suggestions for your day" link={false}>
          <div className="-mx-[3px] mt-[8px] flex gap-[6px]">
            <Suggestion label="Umbrella"><path d="M2 11a8 8 0 0 1 16 0zM10 11v6a2 2 0 0 0 4 0" /></Suggestion>
            <Suggestion label="Outdoors"><path d="M12 2v3M12 6l-4 5 4 2-1 6M8 11l-4 6M13 9l4 1M5 6l-2 3" /></Suggestion>
          </div>
        </InsightCard>
        <InsightCard title="Monthly forecast">
          <svg viewBox="0 0 74 74" className="mx-auto size-[76px]" fill="none" strokeWidth="5.500" aria-hidden="true">
            <path d="M37 4.500a32.500 32.500 0 0 0-32.500 32.500" stroke="#4f87f7" />
            <path d="M37 4.500a32.500 32.500 0 0 1 32.500 32.500" stroke="#f0a268" />
          </svg>
        </InsightCard>
        <InsightCard title="Precipitation record for Jan 15">
          <div className="mt-[14px] flex gap-[16px] pl-[12px]">
            <svg viewBox="0 0 12 20" className="mt-[4px] h-[22px] w-[14px]"><path d="M6 0c2 0 2.500 2 4 5l2 8a6 6 0 0 1-12 0l2-8C3.500 2 4 0 6 0z" fill="#3cc8f4" /></svg>
            <p className="text-[7px] leading-[18px] text-[#c9d6ea]">Rain days <b className="ml-px text-[8px] text-white">6</b></p>
          </div>
        </InsightCard>
      </div>
    </section>
  );
}

/* ---------- taskbar ---------- */

function Badge({ color, text }: { color: string; text: string }) {
  return (
    <g>
      <circle cx="23" cy="6" r="8" fill={color} />
      <text x="23" y="10" fontSize="11" textAnchor="middle" fill="#fff">{text}</text>
    </g>
  );
}

const APPS: { name: string; art: ReactNode; state?: "open" | "active" | "alert" }[] = [
  { name: "Copilot", art: <><path d="M8 4h9l4 9-5 2-9 6c-6 0-5-8-3-12z" fill="#2a8fe8" /><path d="M17 4c7 0 5 7 8 8s4 9-2 12H12l5-12z" fill="#d65bb6" /><path d="M4 13h10l-3 12c-7 0-9-7-7-12z" fill="#6abf4b" /><path d="M13 10h7l-3 10h-7z" fill="#f3eefa" /><rect x="14" y="19" width="17" height="10" rx="2" fill="#f5bf1b" /><text x="22.500" y="27" fontSize="8" fontWeight="700" textAnchor="middle" fill="#222">PRE</text></> },
  { name: "Task view", art: <><rect x="9" y="4" width="19" height="16" rx="2" fill="#f8f8f8" /><rect x="4" y="9" width="18" height="18" rx="2" fill="#2b2b2b" /><path d="M9 9h13v11H9z" fill="#a9a9a9" /></> },
  { name: "Weather alert", art: <><circle cx="14" cy="18" r="11" fill="url(#sunFill)" /><Badge color="#cc2f26" text="1" /></> },
  { name: "Chat", art: <><path d="M14 5a11 11 0 1 1-5 21l-6 2 2-6A11 11 0 0 1 14 5z" fill="#5558af" /><path d="M8 12h9v4l4-3v9l-4-3v2H8z" fill="#fff" /><Badge color="#0078d4" text="1" /></> },
  { name: "Lively", art: <><rect x="3" y="5" width="23" height="23" fill="#1a3aa8" /><path d="M11 10v13h9" stroke="#fff" strokeWidth="3" fill="none" /><Badge color="#0078d4" text="1" /></> },
  { name: "Microsoft Store", art: <><path d="M11 9V4h10v5" stroke="#3aa0e8" strokeWidth="2" fill="none" /><rect x="3" y="8" width="26" height="20" rx="3" fill="#174a86" /><path d="M10 12h5v5h-5z" fill="#f25022" /><path d="M17 12h5v5h-5z" fill="#7fba00" /><path d="M10 19h5v5h-5z" fill="#00a4ef" /><path d="M17 19h5v5h-5z" fill="#ffb900" /></> },
  { name: "Prime Video", art: <><rect x="3" y="3" width="26" height="26" fill="#0f86d8" /><text x="16" y="14" fontSize="8" fontWeight="700" textAnchor="middle" fill="#0a2a50">prime</text><text x="16" y="22" fontSize="8" fontWeight="700" textAnchor="middle" fill="#0a2a50">video</text><path d="M8 24q8 4 16 0" stroke="#0a2a50" fill="none" /></> },
  { name: "Amazon Music", state: "open", art: <><rect x="3" y="3" width="26" height="26" fill="#25d1da" /><text x="16" y="14" fontSize="6" textAnchor="middle" fill="#0b5a63">amazon</text><text x="16" y="20" fontSize="6" textAnchor="middle" fill="#0b5a63">music</text></> },
  { name: "Alexa", art: <><rect x="3" y="3" width="26" height="26" fill="#0078d4" /><circle cx="16" cy="16" r="8.500" fill="none" stroke="#2fd0f5" strokeWidth="3" /></> },
  { name: "File Explorer", art: <><path d="M3 5h10l3 3h13v20H3z" fill="#e9a820" /><path d="M3 11h26v17H3z" fill="#fcd354" /><path d="M8 20h17v8H8z" fill="#1b83d9" /></> },
  { name: "Sensor", art: <><path d="M3 22A13 13 0 0 1 27 12l-6 4a9 9 0 0 0-9 6z" fill="#26241c" /><path d="M9 8a13 13 0 0 1 9-3v8l-5 2z" fill="#f4c20d" /><text x="23" y="29" fontSize="15" fontWeight="600" textAnchor="middle" fill="#333">5</text></> },
  { name: "Kindle", art: <><circle cx="16" cy="16" r="13" fill="#1ba8e8" /><circle cx="16" cy="16" r="10" fill="none" stroke="#bfe8fb" /><path d="M13 8v16M20 12l-6 5 6 7" stroke="#fff" strokeWidth="2.500" fill="none" /></> },
  { name: "Edge", art: <><circle cx="16" cy="16" r="13" fill="#1570c4" /><path d="M4 12C8 1 27 1 29 15c0 6-7 7-10 5 3-6-2-10-7-9-4 0-7 3-8 6z" fill="#3fc9b0" /><path d="M12 13c-5 6 0 14 9 14 3 0 5-2 6-3-5 1-11-1-10-6-1-3-2-4-5-5z" fill="#0b4a92" /></> },
  { name: "Discord", state: "alert", art: <><circle cx="15" cy="17" r="12" fill="#4e67e4" /><path d="M8 21c0-5 1-8 3-9 3-1 6-1 9 0 2 1 3 4 3 9l-4 2-1-2h-5l-1 2z" fill="#fff" /><circle cx="12.500" cy="17.500" r="1.800" fill="#4e67e4" /><circle cx="18.500" cy="17.500" r="1.800" fill="#4e67e4" /><circle cx="24" cy="6" r="7.500" fill="#d9403c" /><text x="24" y="9.500" fontSize="9" textAnchor="middle" fill="#fff">9+</text></> },
  { name: "Spotify", state: "open", art: <><circle cx="16" cy="16" r="12.500" fill="#1ed05f" /><path d="M8 12q9-3 17 2M9 17q8-2 14 2M10 21q6-2 11 2" stroke="#14291b" strokeWidth="2.600" fill="none" /></> },
  { name: "Weather", state: "active", art: <><circle cx="16" cy="15" r="12" fill="url(#sunFill)" /><path d="M17 26a4.500 4.500 0 0 1-1-9 6 6 0 0 1 10-2l5-1v9l-4 3z" fill="#f3f2f4" /><path d="M14 27c-5-2-4-9 1-10 2-4 8-5 11-1" fill="none" stroke="#ffe2a8" strokeWidth="1.500" /></> },
  { name: "Chrome", state: "open", art: <><circle cx="16" cy="16" r="13" fill="#fbbc05" /><path d="M4.700 9.500A13 13 0 0 1 27.300 9.500H16l-5.600 9.700z" fill="#ea4335" /><path d="M4.700 9.500l5.700 9.700L16 22.500l-2 6.300A13 13 0 0 1 4.700 9.500z" fill="#34a853" /><circle cx="16" cy="16" r="6.500" fill="#fff" /><circle cx="16" cy="16" r="5" fill="#4285f4" /></> },
  { name: "Word", state: "open", art: <><rect x="9" y="3" width="21" height="26" rx="2" fill="#2b7cd3" /><path d="M9 3h21v7H9z" fill="#41a5ee" /><path d="M9 22h21v7H9z" fill="#103f91" /><rect x="2" y="9" width="15" height="14" rx="1" fill="#185abd" /><path d="M5 12.500l2 7 2.500-6 2.500 6 2-7" stroke="#fff" strokeWidth="1.800" fill="none" /></> },
];

function Taskbar() {
  return (
    <footer className="flex h-[26px] shrink-0 items-center border-t border-[#a9b3c6] bg-[#dfdee3] pl-[10px]">
      <button aria-label="Start">
        <svg viewBox="0 0 20 20" className="size-[14px]"><path d="M1 1h8.500v8.500H1zM10.500 1H19v8.500h-8.500zM1 10.500h8.500V19H1zM10.500 10.500H19V19h-8.500z" fill="#1390e8" /></svg>
      </button>
      <label className="ml-[7px] flex h-[16px] w-[116px] items-center gap-[5px] rounded-full bg-[#f6f5f8] pl-[6px] text-[#333]">
        <Line className="size-[8px]" width={2.2}><circle cx="9" cy="8.500" r="6.500" /><path d="M13.500 13.500l5 5" /></Line>
        <input aria-label="Search" placeholder="Search" className="min-w-0 flex-1 bg-transparent text-[7px] outline-none placeholder:text-[#555]" />
        <svg viewBox="0 0 56 28" className="mr-[1px] h-[14px] w-[28px] shrink-0" aria-hidden="true">
          <path d="M2 18q6-8 14-4l8 2h10l8-3q8-3 12 6v4q-26 4-52 0z" fill="#6fa24c" />
          <path d="M10 26l14-12 3-10 4 10 15 12-17-7z" fill="#d3d8df" />
          <path d="M28 4v20M18 16l22 2" stroke="#7b8798" strokeWidth="1.500" />
          <path d="M4 22h48" stroke="#5d93c9" strokeWidth="2" strokeDasharray="5 3" />
        </svg>
      </label>
      <div className="ml-[2px] grid w-[422px] grid-cols-18">
        {APPS.map((a) => (
          <button
            key={a.name}
            aria-label={a.name}
            className={
              a.state === "alert" ? "flex h-[22px] flex-col items-center justify-end rounded-[3px] bg-[#f9dfe0]"
                : a.state === "active" ? "flex h-[22px] flex-col items-center justify-end rounded-[3px] bg-[#f3f2f4]"
                : "flex h-[22px] flex-col items-center justify-end rounded-[3px]"
            }
          >
            <svg viewBox="0 0 32 32" className="size-[16px] overflow-visible">{a.art}</svg>
            <span
              className={
                a.state === "active" ? "mt-[1px] h-[2px] w-[9px] rounded-full bg-[#0a78d4]"
                  : a.state === "alert" ? "mt-[1px] h-[2px] w-[4px] rounded-full bg-[#c62f26]"
                  : a.state === "open" ? "mt-[1px] h-[2px] w-[4px] rounded-full bg-[#85858c]"
                  : "mt-[1px] h-[2px]"
              }
            />
          </button>
        ))}
      </div>
      <div className="ml-auto flex items-center pr-[11px] text-[#222]">
        <button aria-label="Hidden icons"><Line className="mr-[9px] size-[8px]" width={2}><path d="M3 13l7-7 7 7" /></Line></button>
        <Line className="mr-[8px] size-[10px]" width={2}><path d="M5 16a4 4 0 0 1 0-7.500 5.500 5.500 0 0 1 10 0 4 4 0 0 1 0 7.500zM2 11l16 2" /></Line>
        <Line className="mr-[4px] size-[9px]" width={1.8}><path d="M1 8a13 13 0 0 1 18 0M4 11a9 9 0 0 1 12 0M7 14a5 5 0 0 1 6 0M10 16v2" /></Line>
        <Line className="mr-[8px] size-[10px]" width={1.6}><path d="M1 7h4l5-4v14l-5-4H1zM12.500 7q2 3 0 6M15 5q3.500 5 0 10M17.500 3q4 7 0 14" /></Line>
        <div className="text-right text-[6px] leading-[9px]"><p>12:10 PM</p><p>1/15/2024</p></div>
        <button aria-label="Notifications" className="ml-[4px]">
          <svg viewBox="0 0 20 20" className="size-[9px]"><path d="M10 0c5 0 7 4 7 8v4l2 4H1l2-4V8c0-4 2-8 7-8zM7 17h6q-3 5-6 0z" fill="#123f8c" /></svg>
        </button>
      </div>
    </footer>
  );
}

/* ---------- page ---------- */

export default function App() {
  return (
    <div className="flex h-screen flex-col overflow-hidden bg-[#1f4d8c] font-['Open_Sans','Noto_Sans',sans-serif]">
      <Defs />
      <TitleBar />
      <div className="relative flex min-h-0 flex-1">
        <Sidebar />
        <div className="flex min-w-0 flex-1 flex-col">
          <Header />
          <div className="flex min-h-0 flex-1">
            <main className="min-w-0 flex-1 overflow-hidden bg-linear-to-b from-[#235497] via-[#1f4e8d] to-[#1b4180]">
              <LocationBar />
              <div className="mx-auto w-full max-w-[660px]">
                <div className="flex h-[28px] items-center pb-px pl-[2px] text-white">
                  <svg viewBox="0 0 20 20" className="mb-[2px] size-[10px]" aria-hidden="true"><path d="M10 0l9 6v14h-6v-6a3 3 0 0 0-6 0v6H1V6z" fill="#fff" /></svg>
                  <span className="ml-[7px] text-[8px] font-medium">Madison, NH</span>
                  <button className="ml-auto flex h-[13px] items-center gap-[3px] rounded-[3px] bg-[#335f9b] px-[3px] text-[6px] font-bold">
                    <Line className="h-[9px] w-[7px]" width={2.5}><path d="M3 0h14v20H3zM8 16h4" /></Line>
                    Live Weather on Mobile
                  </button>
                </div>
                <div className="grid grid-cols-4 gap-[6px]">
                  <CurrentCard />
                  <MapCard />
                  <SunMoonCard />
                </div>
                <TenDays />
                <HourlyCard />
                <Insights />
              </div>
            </main>
            <div className="flex w-[8px] shrink-0 flex-col items-center justify-between bg-[#f7f7f7] py-[3px]" aria-hidden="true">
              <svg viewBox="0 0 8 6" className="h-[4px] w-[5px]"><path d="M4 0l4 6H0z" fill="#858585" /></svg>
              <span className="mt-[2px] h-4/5 w-[4px] rounded-full bg-[#8b8b8b]" />
              <span className="flex-1" />
              <svg viewBox="0 0 8 6" className="h-[4px] w-[5px]"><path d="M4 6L0 0h8z" fill="#858585" /></svg>
            </div>
          </div>
        </div>
        <button aria-label="Widget" className="absolute top-[142px] right-[8px] flex h-[40px] w-[39px] items-center rounded-l-full bg-[#1f2326] pl-[2px]">
          <svg viewBox="0 0 36 36" className="size-[36px]">
            <circle cx="18" cy="18" r="16" fill="#3c4a52" stroke="#4a5960" />
            <circle cx="18" cy="19" r="13" fill="#303c43" />
            <circle cx="12" cy="12" r="2.600" fill="#b9defc" />
            <path d="M13 20l4 2 3-3 4 2-2 4h-7z" fill="#8a5238" />
            <path d="M22 16v5" stroke="#7bb04a" />
            <path d="M28 8l3 4" stroke="#8b7f80" strokeWidth="2.500" />
          </svg>
        </button>
      </div>
      <Taskbar />
    </div>
  );
}
